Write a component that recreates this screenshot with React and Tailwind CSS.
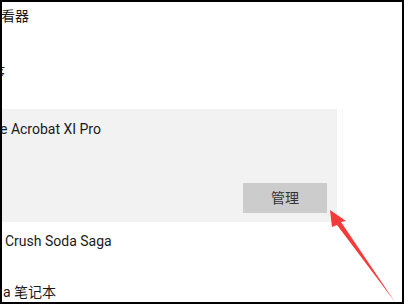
import React from "react";

const font = { fontFamily: 'Roboto, "Noto Sans CJK SC", sans-serif' };

export default function App() {
  return (
    <div className="w-[404px] h-[304px] bg-black p-[2px]">
      <div
        className="relative w-full h-full bg-white overflow-hidden text-[14px] leading-5 text-[#1a1a1a]"
        style={font}
      >
        <div className="h-[50px] pt-[4px] whitespace-nowrap">
          <span className="block ml-[-1px]">看器</span>
        </div>
        <div className="h-[57px] pt-[10px] whitespace-nowrap">
          <span className="block ml-[-11px]">序</span>
        </div>
        <div className="flex h-[113px]">
          <div className="w-[335px] h-full bg-[#f2f2f2] flex flex-col">
            <div className="pt-[10px] whitespace-nowrap">
              <span className="block ml-[-2px]">e Acrobat XI Pro</span>
            </div>
            <div className="mt-auto mb-[9px] mr-[10px] self-end">
              <div className="w-[84px] h-[30px] bg-[#cccccc] flex items-center justify-center text-[#333] text-[14px]">
                管理
              </div>
            </div>
          </div>
          <div className="ml-[5px] w-px h-full bg-[#f6f6f6]" />
        </div>
        <div className="h-[56px] pt-[9px] whitespace-nowrap">
          <span className="block ml-[3px]">Crush Soda Saga</span>
        </div>
        <div className="pt-[4px] whitespace-nowrap">
          <span className="block ml-[1px]">a 笔记本</span>
        </div>
        <svg
          className="absolute left-0 top-0"
          width="400"
          height="300"
          viewBox="0 0 400 300"
        >
          <polygon
            points="328,208 344,219 339,220 393,300 335,223 330,225"
            fill="#f53a3a"
          />
        </svg>
      </div>
    </div>
  );
}
